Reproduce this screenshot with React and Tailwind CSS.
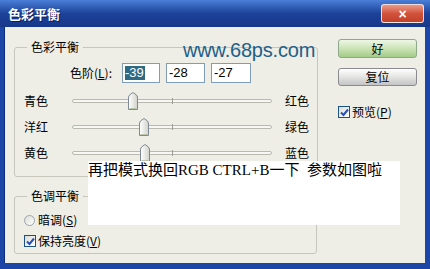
import React from "react";

const ui = { fontFamily: '"Noto Sans CJK SC", "Liberation Sans", sans-serif' };

// One trackbar row: label, groove with thumb, label
const SliderRow = ({ left, right, value }) => (
  <div className="flex items-center h-[26px]">
    <span className="w-[48px] text-[12px] text-black">{left}</span>
    <div className="relative w-[200px] h-[26px]">
      <div className="absolute left-0 right-0 top-[11px] h-[4px] rounded-full border border-[#b9b9b0] bg-[#f7f7f4]" />
      <div className="absolute left-[100px] top-[10px] w-px h-[6px] bg-[#9c9c94]" />
      <svg
        className="absolute top-[4px]"
        style={{ left: 100 + value - 5 }}
        width="10"
        height="18"
        viewBox="0 0 10 18"
      >
        <defs>
          <linearGradient id="thumb" x1="0" y1="0" x2="1" y2="0">
            <stop offset="0" stopColor="#ffffff" />
            <stop offset="1" stopColor="#d2d2cc" />
          </linearGradient>
        </defs>
        <path d="M0.5 17.5 V5 Q0.5 3 5 0.5 Q9.5 3 9.5 5 V17.5 Z" fill="url(#thumb)" stroke="#7f8a93" />
        <line x1="1.5" y1="16.5" x2="8.5" y2="16.5" stroke="#b9c4a8" />
      </svg>
    </div>
    <span className="ml-[13px] text-[12px] text-black">{right}</span>
  </div>
);

const Check = () => (
  <span className="w-[12px] h-[12px] border border-[#1c5180] bg-gradient-to-br from-[#dcdcd6] to-white flex items-center justify-center">
    <svg width="9" height="9" viewBox="0 0 9 9">
      <path d="M1 4.5 L3.5 7 L8 1.5" fill="none" stroke="#2a4fb8" strokeWidth="2" />
    </svg>
  </span>
);

export default function App() {
  return (
    <div
      className="relative w-[430px] h-[269px] overflow-hidden flex flex-col bg-[#1c45a8]"
      style={ui}
    >
      {/* Title bar */}
      <div className="h-[27px] flex items-center justify-between pl-[8px] pr-[6px] bg-gradient-to-b from-[#4a7fd8] via-[#1d4299] to-[#17378a]">
        <span className="text-white font-bold text-[13px] [text-shadow:1px_1px_0_#0a1f5c]">色彩平衡</span>
        <div className="w-[43px] h-[19px] rounded-[3px] border border-white/80 bg-gradient-to-b from-[#e99a8a] via-[#d2523a] to-[#c3402a] flex items-center justify-center">
          <span className="text-white font-bold text-[14px] leading-none" style={{ fontFamily: '"Liberation Sans", sans-serif' }}>×</span>
        </div>
      </div>

      {/* Body */}
      <div className="flex-1 ml-[4px] mr-[5px] mb-[6px] bg-[#eeeee6] flex border-l border-[#0d2c7a]">
        <div className="ml-[9px] pt-[20px] w-[304px] flex flex-col">
          {/* Colour balance group */}
          <div className="relative h-[130px] border border-[#c7c6bb] rounded-[3px] pl-[9px]">
            <span className="absolute -top-[9px] left-[12px] px-[4px] bg-[#eeeee6] text-[12px] leading-[16px] text-black">
              色彩平衡
            </span>
            <div className="flex items-center mt-[15px] h-[20px] pl-[46px] gap-[6px]">
              <span className="w-[48px] text-[12px] text-black">
                色阶(<u>L</u>):
              </span>
              <div className="w-[38px] h-[20px] border border-[#7f9db9] bg-white flex items-center pl-[2px] -ml-[2px]">
                <span className="bg-[#2f6a84] text-white text-[13px] leading-[14px] pr-[1px]" style={{ fontFamily: '"Liberation Sans", sans-serif' }}>-39</span>
              </div>
              <div className="w-[39px] h-[20px] border border-[#7f9db9] bg-white flex items-center pl-[2px]">
                <span className="text-black text-[13px]" style={{ fontFamily: '"Liberation Sans", sans-serif' }}>-28</span>
              </div>
              <div className="w-[40px] h-[20px] border border-[#7f9db9] bg-white flex items-center pl-[2px]">
                <span className="text-black text-[13px]" style={{ fontFamily: '"Liberation Sans", sans-serif' }}>-27</span>
              </div>
            </div>
            <div className="mt-[5px]">
              <SliderRow left="青色" right="红色" value={-39} />
              <SliderRow left="洋红" right="绿色" value={-28} />
              <SliderRow left="黄色" right="蓝色" value={-27} />
            </div>
          </div>

          {/* Tone balance group */}
          <div className="relative mt-[19px] h-[58px] w-[303px] border border-[#c7c6bb] rounded-[3px] pl-[9px] pt-[17px] flex flex-col gap-[9px]">
            <span className="absolute -top-[9px] left-[12px] px-[4px] bg-[#eeeee6] text-[12px] leading-[16px] text-black">
              色调平衡
            </span>
            <div className="flex items-center gap-[3px] h-[12px]">
              <span className="w-[11px] h-[11px] rounded-full border border-[#9aa3ad] bg-gradient-to-br from-[#dcdcd6] to-white" />
              <span className="text-[12px] text-black">
                暗调(<u>S</u>)
              </span>
            </div>
            <div className="flex items-center gap-[2px] h-[12px]">
              <Check />
              <span className="text-[12px] text-black">
                保持亮度(<u>V</u>)
              </span>
            </div>
          </div>
        </div>

        {/* Right column */}
        <div className="ml-[20px] pt-[12px] flex flex-col">
          <button className="w-[79px] h-[19px] rounded-[3px] border border-[#8ea88a] bg-gradient-to-b from-[#eef7e6] via-[#cbe4b6] to-[#a3cc88] text-[12px] leading-none text-black">
            好
          </button>
          <button className="mt-[10px] w-[79px] h-[18px] rounded-[3px] border border-[#8a8a90] bg-gradient-to-b from-white via-[#e4e4e2] to-[#c4c4c6] text-[12px] leading-none text-black">
            复位
          </button>
          <div className="mt-[17px] flex items-center gap-[2px]">
            <Check />
            <span className="text-[12px] text-black">
              预览(<u>P</u>)
            </span>
          </div>
        </div>
      </div>

      {/* Watermark */}
      <span
        className="absolute left-[183px] top-[35px] text-[20px] text-[#1f6088] tracking-[-0.2px]"
        style={{ fontFamily: '"Liberation Sans", sans-serif' }}
      >
        www.68ps.com
      </span>

      {/* Caption overlay */}
      <div className="absolute left-[88px] top-[161px] w-[312px] h-[64px] bg-white">
        <span
          className="block text-[15px] leading-[18px] text-black whitespace-pre"
          style={{ fontFamily: '"Liberation Serif", "Noto Sans CJK SC", serif' }}
        >
          再把模式换回RGB CTRL+B一下  参数如图啦
        </span>
      </div>
    </div>
  );
}
